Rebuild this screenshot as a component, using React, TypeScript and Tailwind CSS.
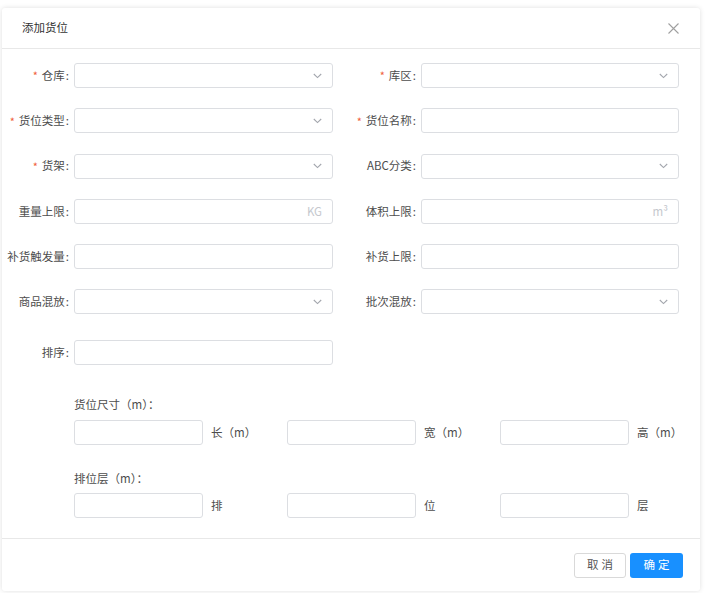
import React from "react";

const font = { fontFamily: '"Noto Sans CJK SC", "Liberation Sans", sans-serif' };

function Chevron() {
  return (
    <svg width="9" height="6" viewBox="0 0 9 6" className="shrink-0">
      <polyline points="0.8,1 4.5,4.6 8.2,1" fill="none" stroke="#a3a6ad" strokeWidth="1.1" />
    </svg>
  );
}

interface FieldProps {
  label: string;
  required?: boolean;
  select?: boolean;
  suffix?: string;
  labelWidth: string;
  inputWidth: string;
}

// label + input pair, label is right aligned
function Field({ label, required, select, suffix, labelWidth, inputWidth }: FieldProps) {
  return (
    <div className="flex items-center h-[25px]">
      <div className={`${labelWidth} pr-[5px] flex justify-end items-center whitespace-nowrap text-[11.5px] text-[#4d4d4d]`}>
        {required && <span className="text-[#f0603c] mr-[4px] text-[11px]">*</span>}
        <span>{label}</span>
        <span className="ml-[1px]">:</span>
      </div>
      <div
        className={`${inputWidth} h-[25px] border border-[#dcdee2] rounded-[3px] bg-white flex items-center justify-end pr-[10px]`}
      >
        {select && <Chevron />}
        {suffix && <span className="text-[11.5px] text-[#c5c8ce]">{suffix}</span>}
      </div>
    </div>
  );
}

type FieldDef = Omit<FieldProps, "labelWidth" | "inputWidth">;

function Row({ left, right }: { left: FieldDef; right?: FieldDef }) {
  return (
    <div className="flex">
      <Field {...left} labelWidth="w-[72px]" inputWidth="w-[259px]" />
      {right && <Field {...right} labelWidth="w-[88px]" inputWidth="w-[258px]" />}
    </div>
  );
}

function SmallInput({ unit }: { unit: string }) {
  return (
    <div className="flex items-center w-[213px] shrink-0">
      <div className="w-[129px] h-[25px] shrink-0 border border-[#dcdee2] rounded-[3px] bg-white" />
      <span className="ml-[8px] text-[11.5px] text-[#4d4d4d] whitespace-nowrap">{unit}</span>
    </div>
  );
}

export default function App() {
  return (
    <div className="w-[705px] h-[593px] bg-white pt-[8px] pl-[2px]" style={font}>
      <div className="w-[698px] h-[583px] flex flex-col bg-white rounded-[3px] shadow-[0_0_5px_rgba(0,0,0,0.13)]">
        {/* header */}
        <div className="h-[41px] shrink-0 flex items-center justify-between pl-[20px] pr-[21px] border-b border-[#e8e8e8]">
          <span className="text-[11.5px] text-[#333]">添加货位</span>
          <svg width="11" height="11" viewBox="0 0 11 11">
            <path d="M0.5 0.5 L10.5 10.5 M10.5 0.5 L0.5 10.5" stroke="#a0a0a0" strokeWidth="1.1" />
          </svg>
        </div>

        {/* body */}
        <div className="flex-1 pt-[14px]">
          <div className="flex flex-col gap-y-[20.3px]">
            <Row left={{ label: "仓库", required: true, select: true }} right={{ label: "库区", required: true, select: true }} />
            <Row left={{ label: "货位类型", required: true, select: true }} right={{ label: "货位名称", required: true }} />
            <Row left={{ label: "货架", required: true, select: true }} right={{ label: "ABC分类", select: true }} />
            <Row left={{ label: "重量上限", suffix: "KG" }} right={{ label: "体积上限", suffix: "m³" }} />
            <Row left={{ label: "补货触发量" }} right={{ label: "补货上限" }} />
            <Row left={{ label: "商品混放", select: true }} right={{ label: "批次混放", select: true }} />
          </div>
          <div className="mt-[26px]">
            <Row left={{ label: "排序" }} />
          </div>

          <div className="pl-[72px]">
            <div className="mt-[30px] h-[18px] leading-[18px] text-[11.5px] text-[#4d4d4d]">货位尺寸（m）：</div>
            <div className="mt-[7px] flex">
              <SmallInput unit="长（m）" />
              <SmallInput unit="宽（m）" />
              <SmallInput unit="高（m）" />
            </div>
            <div className="mt-[24px] h-[18px] leading-[18px] text-[11.5px] text-[#4d4d4d]">排位层（m）：</div>
            <div className="mt-[6px] flex">
              <SmallInput unit="排" />
              <SmallInput unit="位" />
              <SmallInput unit="层" />
            </div>
          </div>
        </div>

        {/* footer */}
        <div className="h-[53px] shrink-0 border-t border-[#e8e8e8] flex items-center justify-end gap-[4px] pr-[17px]">
          <button className="w-[52px] h-[25px] border border-[#d9d9d9] rounded-[3px] bg-white text-[11.5px] text-[#555] tracking-[3px] pl-[3px]">
            取消
          </button>
          <button className="w-[53px] h-[25px] rounded-[3px] bg-[#1890ff] text-[11.5px] text-white tracking-[3px] pl-[3px]">
            确定
          </button>
        </div>
      </div>
    </div>
  );
}
